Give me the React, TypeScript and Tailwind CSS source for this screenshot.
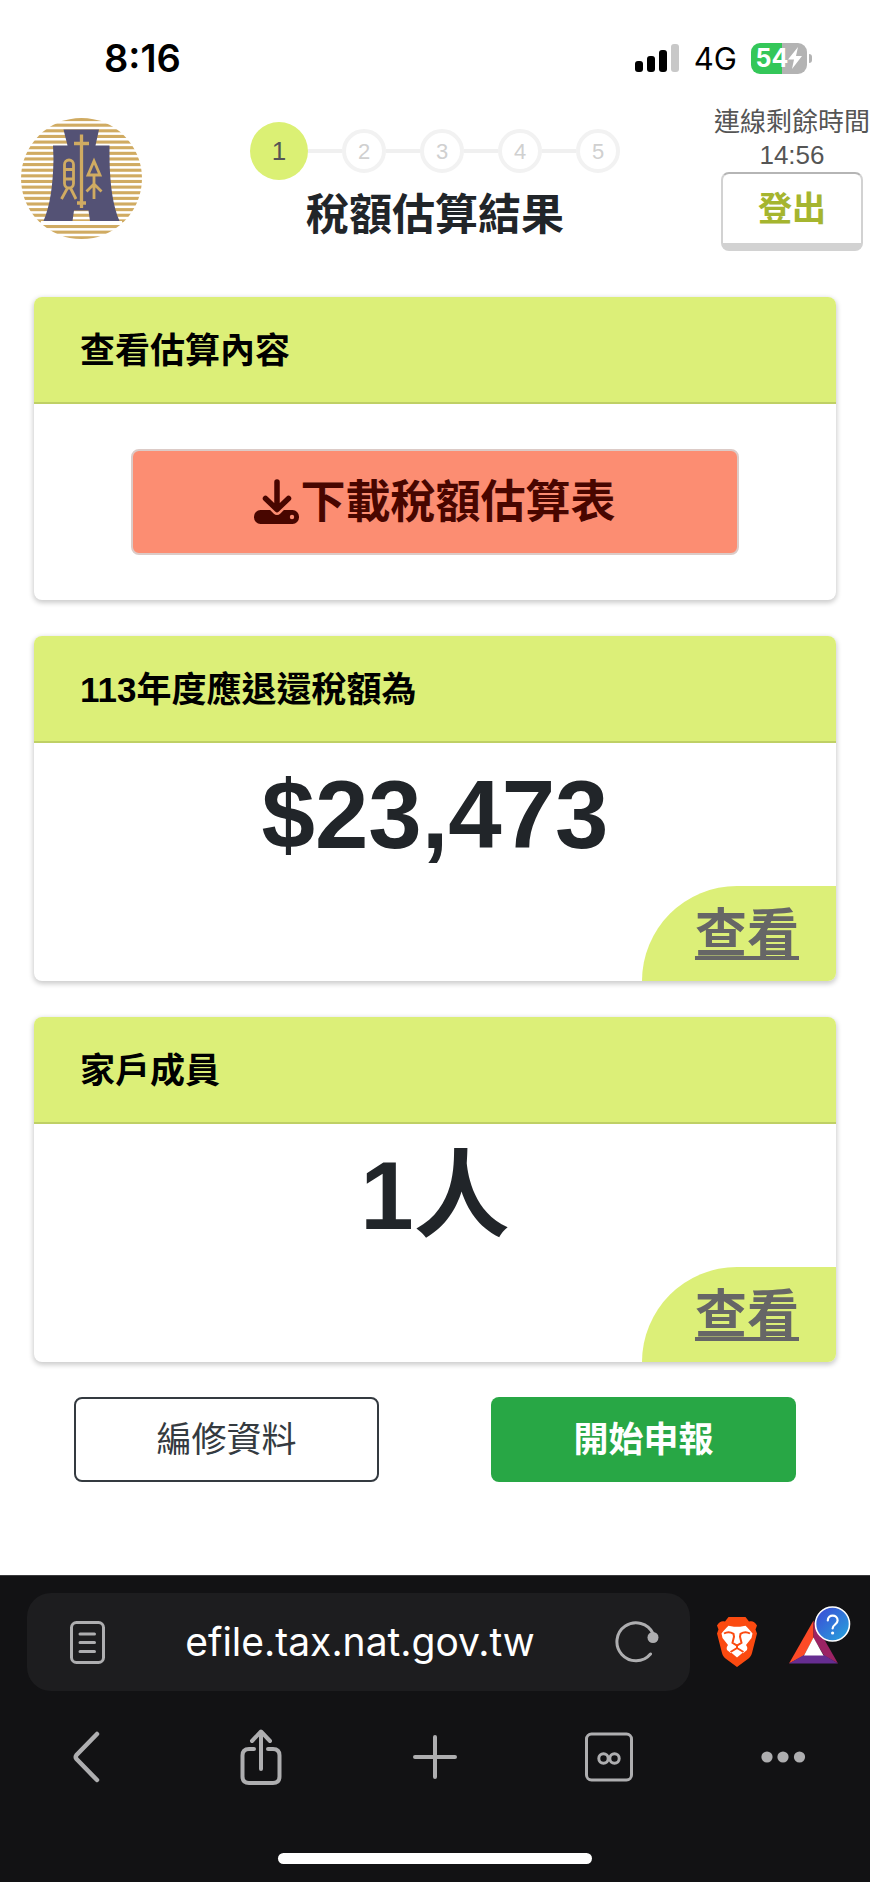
import type { ReactNode } from 'react'

const STEPS = [1, 2, 3, 4, 5]
const STRIPES = Array.from({ length: 22 }, (_, i) => i)

function StatusBar() {
  return (
    <div className="flex h-[106px] items-center justify-between pt-[10px] pr-[58px] pl-[104px] font-['Inter',sans-serif] text-black">
      <span className="text-[38px] leading-none font-semibold">8:16</span>
      <div className="flex items-center gap-[14px]">
        <svg width="45" height="28" viewBox="0 0 45 28" aria-hidden="true">
          <rect x="0" y="17" width="8" height="11" rx="3" />
          <rect x="12" y="12" width="8" height="16" rx="3" />
          <rect x="24" y="6" width="8" height="22" rx="3" />
          <rect x="36" y="0" width="8" height="28" rx="3" fill="#c8c8c8" />
        </svg>
        <span className="text-[31px] leading-none">4G</span>
        <div className="flex items-center gap-[2px]">
          <div className="flex h-[31px] w-[56px] items-center justify-center rounded-[9px] bg-[linear-gradient(90deg,#34c759_56%,#b3b3b3_56%)] text-white">
            <span className="text-[25px] leading-none font-bold">54</span>
            <svg width="14" height="22" viewBox="0 0 14 22" fill="currentColor" aria-hidden="true">
              <path d="M10 0 0 12.5h6L4 22 14 9H8z" />
            </svg>
          </div>
          <div className="h-[9px] w-[3px] rounded-r-full bg-[#b3b3b3]" />
        </div>
      </div>
    </div>
  )
}

function Logo() {
  return (
    <svg className="mt-3 ml-[21px]" width="121" height="121" viewBox="0 0 121 121" role="img" aria-label="財政部">
      <defs>
        <clipPath id="seal">
          <circle cx="60.5" cy="60.5" r="60.5" />
        </clipPath>
      </defs>
      <g clipPath="url(#seal)" fill="#d0ab62">
        {STRIPES.map((i) => (
          <rect key={i} x="0" y={i * 5.63} width="121" height="3.1" />
        ))}
      </g>
      <path d="M20 103h81v4H20z" fill="#fff" />
      <path
        d="M42.500 11.500H78L74.500 27.500H88.500V41C89 68 92 88 98.500 103H69L67.500 92.500H53L51.500 103H22.500C29 88 32 68 32.500 41L32 27.500H46.500z"
        fill="#545275"
      />
      <g fill="none" stroke="#d0ab62" strokeWidth="2.800">
        <path d="M60.500 16.500V90M53 25.500H68M56 85H65" strokeWidth="3.300" />
        <rect x="43.500" y="42" width="9" height="28" rx="4.500" />
        <path d="M43.500 51.500h9M43.500 61h9M46.500 70 40.500 81M49.500 70 55 81" />
        <path d="M73 43 67 57H79zM73 57V81M65.500 73.500 73 66 80.500 73.500" />
      </g>
    </svg>
  )
}

function StepBar() {
  return (
    <ol className="flex items-center pt-4 font-['Liberation_Sans',sans-serif]">
      {STEPS.map((step) =>
        step === 1 ? (
          <li
            key={step}
            aria-current="step"
            className="flex size-[58px] items-center justify-center rounded-full bg-[#dbf074] text-[26px] text-[#555]"
          >
            {step}
          </li>
        ) : (
          <li key={step} className="flex items-center">
            <span className="h-1 w-[34px] bg-[#f0f0f0]" />
            <span className="flex size-11 items-center justify-center rounded-full border-4 border-[#f2f2f2] text-[22px] text-[#d0d0d0]">
              {step}
            </span>
          </li>
        )
      )}
    </ol>
  )
}

function PageHeader() {
  return (
    <header className="grid grid-cols-[1fr_auto_1fr]">
      <Logo />
      <div className="flex flex-col items-center">
        <StepBar />
        <h1 className="pt-[2px] text-[43px] leading-[66px] font-bold text-[#212529]">稅額估算結果</h1>
      </div>
      <div className="ml-auto flex w-[156px] flex-col items-center text-[26px] leading-[33px] text-[#555]">
        <span className="whitespace-nowrap">連線剩餘時間</span>
        <span>14:56</span>
        <button
          type="button"
          className="h-[79px] w-[142px] rounded-lg border-2 border-b-8 border-[#d2d2d2] border-t-[#b5b5b5] bg-white text-[34px] leading-none font-bold text-[#a5b52f]"
        >
          登出
        </button>
      </div>
    </header>
  )
}

interface ICardProps {
  title: string
  children: ReactNode
}

function Card({ title, children }: ICardProps) {
  return (
    <section className="overflow-hidden rounded-lg bg-white shadow-[0_2px_5px_1px_rgba(0,0,0,0.2)]">
      <h2 className="border-b-2 border-[#bfd065] bg-[#dcef78] px-[46px] pt-[28px] pb-[26px] text-[35px] leading-[51px] font-bold text-black">
        {title}
      </h2>
      {children}
    </section>
  )
}

function Summary({ value }: { value: string }) {
  return (
    <div className="flex flex-col">
      <p className="py-2 text-center text-[96px] leading-[127px] font-bold text-[#212529]">{value}</p>
      <a
        href="#detail"
        className="flex h-[95px] w-[194px] items-center justify-center self-end rounded-tl-[95px] bg-[#dcef78] pl-4 text-[52px] leading-none font-bold text-[#666] underline decoration-4 underline-offset-4"
      >
        查看
      </a>
    </div>
  )
}

function DownloadIcon() {
  return (
    <svg width="46" height="46" viewBox="0 0 46 46" fill="none" aria-hidden="true">
      <rect x="0" y="31" width="45" height="14" rx="6.5" fill="currentColor" />
      <path d="M23 3v27M11.500 20 23 31.500 34.500 20" stroke="#fc8d72" strokeWidth="9" strokeLinejoin="round" />
      <path d="M23 3v27M11.500 19.500 23 30.500 34.500 19.500" stroke="currentColor" strokeWidth="5.500" strokeLinecap="round" strokeLinejoin="round" />
      <circle cx="38" cy="38" r="2.200" fill="#fc8d72" />
    </svg>
  )
}

function BraveIcon() {
  return (
    <svg width="42" height="50" viewBox="0 0 42 50" aria-hidden="true">
      <path
        d="M12.500 0h17l3.500 4.500c3-.8 5.500-.3 8 4l-1.500 4 1.500 4-5 19.500c-.8 3-2 4.500-4.500 6.300L21 50l-10.500-7.700C8 40.500 6.800 39 6 36L1 16.500l1.500-4L1 8.500c2.500-4.300 5-4.800 8-4z"
        fill="#fb4a10"
      />
      <path
        d="M12.500 8.800 18 9.800h6l5.500-1c2.300 2.200 5 5 7 7.700l-1 4.500-5.500 7c1.200 1.500 1.700 3 1 5l-4 3.200L21 31.800l-6 4.400-4-3.200c-.7-2-.2-3.500 1-5l-5.500-7-1-4.500c2-2.700 4.700-5.500 7-7.700z"
        fill="#fff"
      />
      <path d="M21 31.500 27.500 35 21 40.500 14.500 35z" fill="#fff" />
      <g fill="none" stroke="#fb4a10" strokeWidth="2">
        <path d="M8 16.500c3-1.800 6-2 9.500.3l.5 3-1.500 6L21 28.500l4.500-2.700-1.500-6 .5-3c3.500-2.300 6.500-2.100 9.500-.3" />
        <path d="M21 28v3l-6.500 4M21 31l6.500 4" />
      </g>
    </svg>
  )
}

function RewardsIcon() {
  return (
    <svg width="62" height="58" viewBox="0 0 62 58" aria-hidden="true">
      <defs>
        <linearGradient id="badge" x1="0" y1="0" x2="1" y2="1">
          <stop offset="0" stopColor="#3d46d6" />
          <stop offset="1" stopColor="#25a7dc" />
        </linearGradient>
      </defs>
      <path d="M24.500 14.500 0 57.500 15 49.500 24.500 32z" fill="#fc4a27" />
      <path d="M24.500 14.500 49 57.500 35 49.500 24.500 32z" fill="#9b2364" />
      <path d="M0 57.500H49L35 49H15z" fill="#662d91" />
      <path d="M24.500 31.500 34.500 49.500H15z" fill="#fff" />
      <circle cx="43.500" cy="18" r="17" fill="url(#badge)" stroke="#fff" strokeWidth="1.600" />
      <path d="M38.800 14.500c0-6.500 9.800-6.500 9.800 0 0 4-5 4-5 8" fill="none" stroke="#fff" strokeWidth="2.200" strokeLinecap="round" />
      <circle cx="43.600" cy="27" r="1.600" fill="#fff" />
    </svg>
  )
}

function AddressBar() {
  return (
    <div className="flex items-center pt-[17px] pr-[19px] pl-[27px]">
      <div className="flex h-[98px] min-w-0 flex-1 items-center rounded-[24px] bg-[#1d1d1f] pr-[31px] pl-[43px] text-[#aeaeb0]">
        <button type="button" aria-label="閱讀模式">
          <svg width="35" height="43" viewBox="0 0 35 43" fill="none" stroke="currentColor" strokeWidth="3" strokeLinecap="round" aria-hidden="true">
            <rect x="1.500" y="1.500" width="32" height="40" rx="5" />
            <path d="M10 13h14.500M10 21.500h14.500M10 30.500h14.500" />
          </svg>
        </button>
        <input
          aria-label="網址"
          defaultValue="efile.tax.nat.gov.tw"
          className="min-w-0 flex-1 bg-transparent text-center font-['Inter',sans-serif] text-[39px] leading-[50px] text-white outline-none"
        />
        <button type="button" aria-label="重新整理">
          <svg width="44" height="42" viewBox="0 0 44 42" fill="none" aria-hidden="true">
            <path d="M35.500 33A19 19 0 1 1 38 12.500" stroke="currentColor" strokeWidth="3" strokeLinecap="round" />
            <circle cx="38" cy="16.500" r="5.500" fill="currentColor" />
          </svg>
        </button>
      </div>
      <button type="button" aria-label="Brave Shields" className="ml-[26px]">
        <BraveIcon />
      </button>
      <button type="button" aria-label="Brave Rewards" className="ml-[31px] pb-[14px]">
        <RewardsIcon />
      </button>
    </div>
  )
}

function ToolbarButton({ label, children }: { label: string; children: ReactNode }) {
  return (
    <button type="button" aria-label={label} className="flex h-[60px] items-center justify-center">
      <svg width="52" height="60" viewBox="0 0 52 60" fill="none" stroke="currentColor" strokeWidth="4" strokeLinecap="round" strokeLinejoin="round" aria-hidden="true">
        {children}
      </svg>
    </button>
  )
}

function BrowserBar() {
  return (
    <footer className="border-t border-[#3a3a3c] bg-[#121214]">
      <AddressBar />
      <nav className="mt-[36px] grid grid-cols-5 text-[#aeaeb0]">
        <ToolbarButton label="上一頁">
          <path d="M36 7 15.500 28Q14 30 15.500 32L36 53" strokeWidth="4.500" />
        </ToolbarButton>
        <ToolbarButton label="分享">
          <path d="M26 5v37M17 14l9-9.500 9 9.500M19 22h-5q-6.500 0-6.500 6.500v21q0 6.500 6.500 6.500h24q6.500 0 6.500-6.500v-21q0-6.500-6.500-6.500h-5" />
        </ToolbarButton>
        <ToolbarButton label="新增分頁">
          <path d="M6 30h40M26 10v40" />
        </ToolbarButton>
        <ToolbarButton label="分頁">
          <rect x="3.500" y="7" width="45" height="46" rx="5" strokeWidth="3" />
          <circle cx="20.500" cy="31.500" r="4.700" strokeWidth="3" />
          <circle cx="31.500" cy="31.500" r="4.700" strokeWidth="3" />
        </ToolbarButton>
        <ToolbarButton label="更多">
          <g fill="currentColor" stroke="none">
            <circle cx="10" cy="30" r="5.600" />
            <circle cx="26" cy="30" r="5.600" />
            <circle cx="42.500" cy="30" r="5.600" />
          </g>
        </ToolbarButton>
      </nav>
      <div className="mx-auto mt-[66px] mb-[18px] h-[11px] w-[36%] rounded-full bg-white" />
    </footer>
  )
}

export default function App() {
  return (
    <div className="flex min-h-screen flex-col bg-white font-['Liberation_Sans','Noto_Sans_CJK_TC',sans-serif]">
      <StatusBar />
      <PageHeader />

      <main className="flex-1 pt-[46px] pb-[92px]">
        <div className="flex flex-col gap-9 px-[34px]">
          <Card title="查看估算內容">
            <div className="px-[97px] py-[45px]">
              <button
                type="button"
                className="flex h-[106px] w-full items-center justify-center rounded-lg border-2 border-[#dccbc7] bg-[#fc8d72] text-[45px] leading-none font-bold text-[#480600]"
              >
                <DownloadIcon />
                下載稅額估算表
              </button>
            </div>
          </Card>

          <Card title="113年度應退還稅額為">
            <Summary value="$23,473" />
          </Card>

          <Card title="家戶成員">
            <Summary value="1人" />
          </Card>
        </div>

        <div className="grid grid-cols-2 justify-items-center px-[18px] pt-[35px] text-[35px] leading-none">
          <button type="button" className="h-[85px] w-[73%] rounded-lg border-2 border-[#343a40] bg-white text-[#343a40]">
            編修資料
          </button>
          <button type="button" className="h-[85px] w-[73%] rounded-lg bg-[#28a745] font-bold text-white">
            開始申報
          </button>
        </div>
      </main>

      <BrowserBar />
    </div>
  )
}
